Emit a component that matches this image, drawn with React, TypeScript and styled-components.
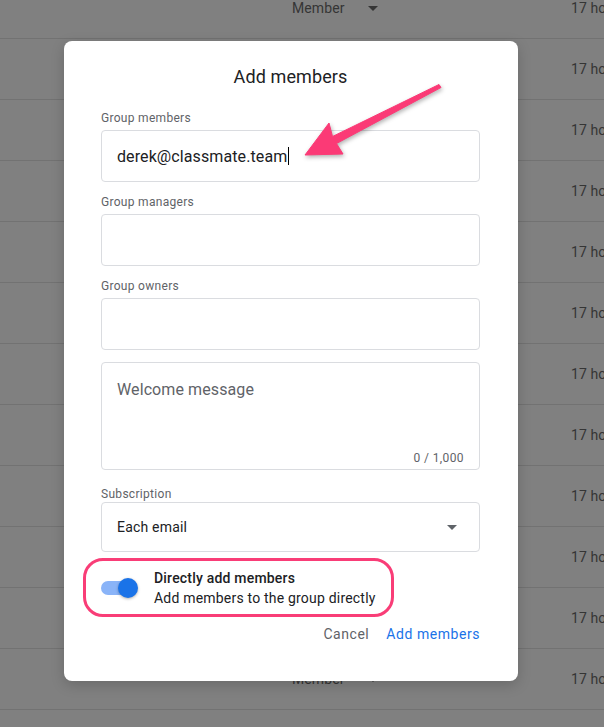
import React from "react";
import styled, { createGlobalStyle } from "styled-components";

const Global = createGlobalStyle`
  html, body {
    margin: 0;
    padding: 0;
    background: #808080;
    overflow: hidden;
  }
  body {
    font-family: Roboto, "Liberation Sans", Arial, sans-serif;
  }
  #root {
    position: relative;
    width: 604px;
    height: 727px;
    overflow: hidden;
  }
`;

const Backdrop = styled.div`
  margin-top: -22px;
  display: flex;
  flex-direction: column;
`;

const Row = styled.div`
  height: 60px;
  border-bottom: 1px solid #727272;
  display: flex;
  align-items: center;
  padding-left: 292px;
  font-size: 14px;
  color: #353535;
  letter-spacing: 0.1px;
  white-space: nowrap;
  overflow: hidden;
`;

const RoleCell = styled.div`
  flex: none;
  width: 279px;
  display: flex;
  align-items: center;
  gap: 23px;
`;

const Caret = styled.span<{ $color?: string }>`
  width: 0;
  height: 0;
  border-left: 5px solid transparent;
  border-right: 5px solid transparent;
  border-top: 5px solid ${(p) => p.$color || "#353535"};
`;

const TimeCell = styled.div`
  flex: none;
  white-space: nowrap;
`;

const Dialog = styled.div`
  position: absolute;
  left: 64px;
  top: 41px;
  width: 454px;
  box-sizing: border-box;
  padding: 24px 38px 29px 37px;
  background: #fff;
  border-radius: 8px;
  box-shadow: 0 4px 14px rgba(0, 0, 0, 0.18);
  display: flex;
  flex-direction: column;
`;

const Title = styled.h2`
  margin: 0 0 21px;
  font-size: 18px;
  line-height: 24px;
  font-weight: 400;
  color: #202124;
  text-align: center;
  letter-spacing: 0.1px;
`;

const FieldGroup = styled.div<{ $gap?: number; $after?: number }>`
  display: flex;
  flex-direction: column;
  gap: ${(p) => (p.$gap ?? 4)}px;
  margin-bottom: ${(p) => (p.$after ?? 12)}px;
`;

const Label = styled.div`
  font-size: 12px;
  line-height: 16px;
  color: #5f6368;
  letter-spacing: 0.3px;
`;

const Box = styled.div<{ $h: number }>`
  box-sizing: border-box;
  height: ${(p) => p.$h}px;
  border: 1px solid #dadce0;
  border-radius: 4px;
  padding: 0 15px;
  display: flex;
  align-items: center;
  font-size: 16px;
  color: #202124;
  letter-spacing: 0.1px;
`;

const Cursor = styled.span`
  display: inline-block;
  width: 1px;
  height: 18px;
  background: #000;
  margin-left: 1px;
`;

const TextArea = styled.div`
  box-sizing: border-box;
  height: 108px;
  border: 1px solid #dadce0;
  border-radius: 4px;
  padding: 15px 15px 3px;
  display: flex;
  flex-direction: column;
  justify-content: space-between;
  margin-bottom: 16px;
`;

const Placeholder = styled.div`
  font-size: 16px;
  line-height: 24px;
  color: #5f6368;
  letter-spacing: 0.1px;
`;

const Counter = styled.div`
  align-self: flex-end;
  font-size: 12px;
  line-height: 16px;
  color: #5f6368;
  letter-spacing: 0.4px;
`;

const Select = styled(Box)`
  justify-content: space-between;
  font-size: 14px;
  padding-right: 22px;
  letter-spacing: 0.2px;
`;

const ToggleRow = styled.div`
  position: relative;
  margin-top: 16px;
  display: flex;
  align-items: center;
  gap: 16px;
`;

const Switch = styled.div`
  position: relative;
  width: 37px;
  height: 20px;
  flex: none;
`;

const Track = styled.div`
  position: absolute;
  left: 0;
  top: 3px;
  width: 34px;
  height: 14px;
  border-radius: 7px;
  background: #8ab4f8;
`;

const Knob = styled.div`
  position: absolute;
  left: 17px;
  top: 0;
  width: 20px;
  height: 20px;
  border-radius: 50%;
  background: #1a73e8;
  box-shadow: 0 1px 3px rgba(0, 0, 0, 0.3);
`;

const ToggleText = styled.div`
  display: flex;
  flex-direction: column;
  font-size: 14px;
  line-height: 20px;
  color: #202124;
  letter-spacing: 0.2px;
`;

const ToggleTitle = styled.div`
  font-weight: 500;
`;

const Highlight = styled.div`
  position: absolute;
  left: -18px;
  top: -10px;
  width: 311px;
  height: 59px;
  box-sizing: border-box;
  border: 3px solid #f93d77;
  border-radius: 20px;
  pointer-events: none;
`;

const Actions = styled.div`
  margin-top: 8px;
  margin-right: -8px;
  display: flex;
  justify-content: flex-end;
  gap: 1px;
`;

const Button = styled.button<{ $primary?: boolean }>`
  background: none;
  border: none;
  padding: 8px;
  font-family: Roboto, "Liberation Sans", Arial, sans-serif;
  font-size: 14px;
  line-height: 20px;
  font-weight: 400;
  letter-spacing: 0.55px;
  color: ${(p) => (p.$primary ? "#1a73e8" : "#5f6368")};
  cursor: pointer;
`;

const ArrowLayer = styled.svg`
  position: absolute;
  left: 0;
  top: 0;
  width: 604px;
  height: 727px;
  pointer-events: none;
  filter: drop-shadow(1px 2px 2px rgba(0, 0, 0, 0.3));
`;

export default function App() {
  const rows = Array.from({ length: 13 });
  return (
    <>
      <Global />
      <Backdrop>
        {rows.map((_, i) => (
          <Row key={i}>
            <RoleCell>
              Member
              <Caret />
            </RoleCell>
            <TimeCell>17 hours ago</TimeCell>
          </Row>
        ))}
      </Backdrop>
      <Dialog>
        <Title>Add members</Title>
        <FieldGroup>
          <Label>Group members</Label>
          <Box $h={52}>
            derek@classmate.team
            <Cursor />
          </Box>
        </FieldGroup>
        <FieldGroup>
          <Label>Group managers</Label>
          <Box $h={52} />
        </FieldGroup>
        <FieldGroup>
          <Label>Group owners</Label>
          <Box $h={52} />
        </FieldGroup>
        <TextArea>
          <Placeholder>Welcome message</Placeholder>
          <Counter>0 / 1,000</Counter>
        </TextArea>
        <FieldGroup $gap={0} $after={0}>
          <Label>Subscription</Label>
          <Select $h={50}>
            Each email
            <Caret $color="#5f6368" />
          </Select>
        </FieldGroup>
        <ToggleRow>
          <Switch>
            <Track />
            <Knob />
          </Switch>
          <ToggleText>
            <ToggleTitle>Directly add members</ToggleTitle>
            <div>Add members to the group directly</div>
          </ToggleText>
          <Highlight />
        </ToggleRow>
        <Actions>
          <Button>Cancel</Button>
          <Button $primary>Add members</Button>
        </Actions>
      </Dialog>
      <ArrowLayer viewBox="0 0 604 727">
        <polygon
          fill="#fb3a76"
          strokeLinejoin="round"
          stroke="#fb3a76"
          strokeWidth="1"
          points="305,155 343,154 336.5,143.5 441,87.5 439,84.5 332.5,136.5 329,123"
        />
      </ArrowLayer>
    </>
  );
}
